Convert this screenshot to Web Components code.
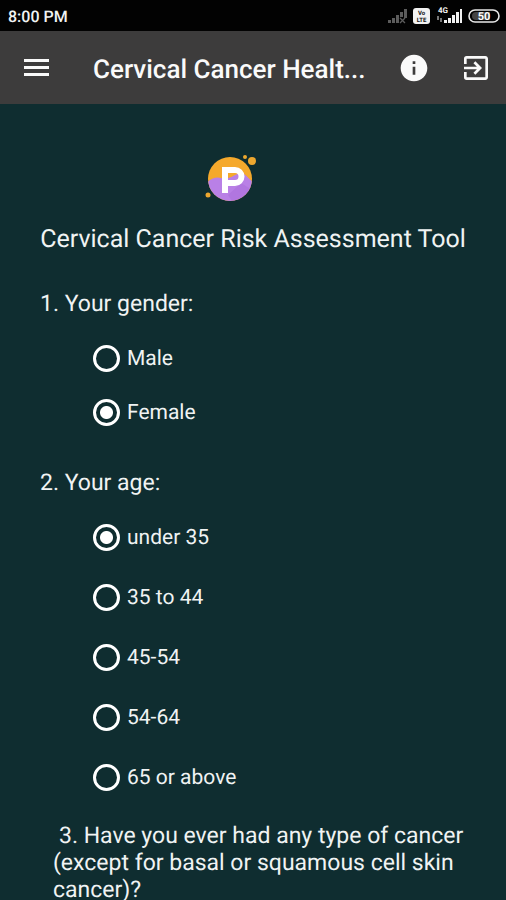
<!DOCTYPE html>
<html lang="en">
<head>
<meta charset="UTF-8">
<meta name="viewport" content="width=device-width, initial-scale=1">
<title>Cervical Cancer Risk Assessment Tool</title>
<style>
  html {
    scrollbar-width: none;
  }

  body {
    margin: 0;
    background: #0f2d30;
    color: #f0f3f3;
    font-family: Roboto, "Liberation Sans", sans-serif;
    text-rendering: geometricPrecision;
  }
</style>
</head>
<body>
<risk-app>
  <status-bar slot="top" time="8:00 PM"></status-bar>
  <app-bar slot="top">Cervical Cancer Healt...</app-bar>
  <app-logo></app-logo>
  <tool-heading>Cervical Cancer Risk Assessment Tool</tool-heading>
  <risk-question name="gender" options="Male|Female" selected="Female">1. Your gender:</risk-question>
  <risk-question name="age" class="age" options="under 35|35 to 44|45-54|54-64|65 or above" selected="under 35">2. Your age:</risk-question>
  <risk-question name="cancer" class="long">3. Have you ever had any type of cancer (except for basal or squamous cell skin cancer)?</risk-question>
</risk-app>

<script>
class RiskApp extends HTMLElement {
  constructor() {
    super();
    this.attachShadow({ mode: 'open' });
    this.shadowRoot.innerHTML = `
      <style>
        :host {
          display: block;
          min-height: 100vh;
        }

        header {
          position: sticky;
          top: 0;
          z-index: 1;
        }

        main {
          padding-top: 48px;
        }
      </style>
      <header><slot name="top"></slot></header>
      <main><slot></slot></main>
    `;
  }
}

class StatusBar extends HTMLElement {
  constructor() {
    super();
    this.attachShadow({ mode: 'open' });
  }

  connectedCallback() {
    this.shadowRoot.innerHTML = `
      <style>
        :host {
          display: flex;
          align-items: center;
          justify-content: space-between;
          height: 31px;
          padding: 0 6px 0 8px;
          background: #020202;
          font-size: 16px;
          font-weight: 500;
        }

        span {
          padding-top: 2px;
        }

        .icons {
          display: flex;
          align-items: center;
          gap: 6px;
        }

        svg {
          display: block;
        }
      </style>
      <span>${this.getAttribute('time')}</span>
      <div class="icons">
        <!-- no signal -->
        <svg width="19" height="18" viewBox="0 0 19 18" fill="#5c5c5c">
          <path d="M0 13h3v3H0zM4 11h3v5H4zM8 8h3v8H8zM12 5h3v5h-3zM16 2h3v9h-3z"/>
          <path d="M12 11l5 5M17 11l-5 5" stroke="#5c5c5c" stroke-width="1.3"/>
        </svg>
        <!-- VoLTE -->
        <svg width="17" height="16" viewBox="0 0 17 16" font-family="Roboto, sans-serif" font-weight="700" font-size="6" text-anchor="middle">
          <rect width="17" height="16" rx="3" fill="#f2f2f2"/>
          <text x="8.5" y="7" fill="#111">Vo</text>
          <text x="8.5" y="14" fill="#111">LTE</text>
        </svg>
        <!-- 4G signal -->
        <svg width="26" height="20" viewBox="0 0 26 20" fill="#f2f2f2">
          <text x="2" y="7" font-family="Roboto, sans-serif" font-weight="700" font-size="8">4G</text>
          <path d="M8 14h3v3H8zM12 12h3v5h-3zM16 9h3v8h-3zM20 6h3v11h-3zM24 3h2v14h-2z"/>
          <path d="M1 10h2v4H1zM4 12h2v4H4z" fill="#777"/>
        </svg>
        <!-- battery -->
        <svg width="32" height="16" viewBox="0 0 32 16">
          <rect x="1" y="2" width="30" height="12" rx="6" fill="none" stroke="#e8e8e8" stroke-width="1.6"/>
          <path d="M8 4h14v8H8a4 4 0 0 1 0-8z" fill="#444"/>
          <text x="16" y="12" fill="#fff" font-family="Roboto, sans-serif" font-weight="700" font-size="11" text-anchor="middle">50</text>
        </svg>
      </div>
    `;
  }
}

class AppBar extends HTMLElement {
  constructor() {
    super();
    this.attachShadow({ mode: 'open' });
    this.shadowRoot.innerHTML = `
      <style>
        :host {
          display: flex;
          align-items: center;
          height: 73px;
          padding: 0 14px 0 20px;
          background: #3d3c3c;
          color: #fafafa;
        }

        button {
          display: flex;
          padding: 0;
          border: none;
          background: none;
          color: inherit;
          cursor: pointer;
        }

        h1 {
          flex: 1;
          min-width: 0;
          margin: 0 0 0 41px;
          padding-top: 4px;
          font-size: 26px;
          font-weight: 500;
          line-height: 32px;
          white-space: nowrap;
          overflow: hidden;
        }

        .actions {
          display: flex;
          gap: 30px;
        }
      </style>
      <button aria-label="Menu">
        <svg width="32" height="32" viewBox="0 0 32 32" fill="currentColor">
          <path d="M4 7h25v3H4zM4 14h25v3H4zM4 21h25v3H4z"/>
        </svg>
      </button>
      <h1><slot></slot></h1>
      <div class="actions">
        <button aria-label="Information">
          <svg width="32" height="32" viewBox="0 0 24 24" fill="currentColor">
            <path d="M12 2C6.5 2 2 6.5 2 12s4.500 10 10 10 10-4.500 10-10S17.500 2 12 2zm1 15h-2v-6h2v6zm0-8h-2V7h2v2z"/>
          </svg>
        </button>
        <button aria-label="Exit">
          <svg width="32" height="32" viewBox="0 0 24 24" fill="currentColor">
            <path d="M10.090 15.590L11.500 17l5-5-5-5-1.410 1.410L12.670 11H3v2h9.670l-2.580 2.590zM19 3H5a2 2 0 0 0-2 2v4h2V5h14v14H5v-4H3v4a2 2 0 0 0 2 2h14c1.100 0 2-.9 2-2V5c0-1.100-.9-2-2-2z"/>
          </svg>
        </button>
      </div>
    `;
  }
}

class AppLogo extends HTMLElement {
  constructor() {
    super();
    this.attachShadow({ mode: 'open' });
    this.shadowRoot.innerHTML = `
      <style>
        :host {
          display: flex;
          justify-content: center;
          padding-right: 46px;
        }
      </style>
      <svg width="52" height="52" viewBox="0 0 52 52" role="img" aria-label="Logo">
        <defs>
          <clipPath id="disc"><circle cx="26" cy="27" r="22"/></clipPath>
        </defs>
        <g clip-path="url(#disc)">
          <rect width="52" height="52" fill="#f5a92c"/>
          <path d="M0 33C5 28 11 24 17 26C25 29 33 20 38 21C42 22 45 28 50 30V52H0z" fill="#b980e6"/>
          <path d="M24 43l13-12 13 8v13H30z" fill="#a566d6" opacity="0.4"/>
        </g>
        <!-- white mark: stem and bowl -->
        <path d="M21 41V18H31a6.500 6.500 0 0 1 0 13H21" fill="none" stroke="#fff" stroke-width="6"/>
        <circle cx="41" cy="5" r="2" fill="#eda72f"/>
        <circle cx="48" cy="9" r="4" fill="#eda72f"/>
        <circle cx="4" cy="43" r="2.500" fill="#eda72f"/>
      </svg>
    `;
  }
}

class ToolHeading extends HTMLElement {
  constructor() {
    super();
    this.attachShadow({ mode: 'open' });
    this.shadowRoot.innerHTML = `
      <style>
        :host {
          display: block;
          margin-top: 22px;
          text-align: center;
        }

        h2 {
          margin: 0;
          font-size: 25px;
          font-weight: 400;
          line-height: 27px;
        }
      </style>
      <h2><slot></slot></h2>
    `;
  }
}

class RiskQuestion extends HTMLElement {
  constructor() {
    super();
    this.attachShadow({ mode: 'open' });
  }

  connectedCallback() {
    const name = this.getAttribute('name');
    const selected = this.getAttribute('selected');
    const options = (this.getAttribute('options') || '').split('|').filter(Boolean);

    this.shadowRoot.innerHTML = `
      <style>
        :host {
          display: block;
          padding: 37px 24px 0 40px;
          --row: 54px;
          --gap: 14px;
        }

        :host(.age) {
          padding-top: 30px;
          --row: 60px;
          --gap: 11px;
        }

        :host(.long) {
          padding: 15px 24px 0 53px;
        }

        :host(.long) legend {
          text-indent: 6px;
        }

        fieldset {
          margin: 0;
          padding: 0;
          border: none;
          min-width: 0;
        }

        legend {
          padding: 0;
          font-size: 23px;
          line-height: 27px;
        }

        .options {
          padding: var(--gap) 0 0 53px;
        }

        .option {
          display: flex;
          align-items: center;
          height: var(--row);
        }

        label {
          padding: 3px 0 0 7px;
          font-size: 21px;
          line-height: 27px;
        }

        input {
          appearance: none;
          box-sizing: border-box;
          width: 27px;
          height: 27px;
          margin: 0;
          border: 3px solid #fff;
          border-radius: 50%;
          cursor: pointer;
        }

        input:checked {
          background: radial-gradient(circle, #fff 6px, transparent 7px);
        }
      </style>
      <fieldset>
        <legend><slot></slot></legend>
        ${options.length ? `<div class="options">
          ${options.map((text, i) => `
            <div class="option">
              <input type="radio" name="${name}" id="${name}-${i}" value="${text}" ${text === selected ? 'checked' : ''}>
              <label for="${name}-${i}">${text}</label>
            </div>`).join('')}
        </div>` : ''}
      </fieldset>
    `;
  }
}

customElements.define('risk-app', RiskApp);
customElements.define('status-bar', StatusBar);
customElements.define('app-bar', AppBar);
customElements.define('app-logo', AppLogo);
customElements.define('tool-heading', ToolHeading);
customElements.define('risk-question', RiskQuestion);
</script>
</body>
</html>
